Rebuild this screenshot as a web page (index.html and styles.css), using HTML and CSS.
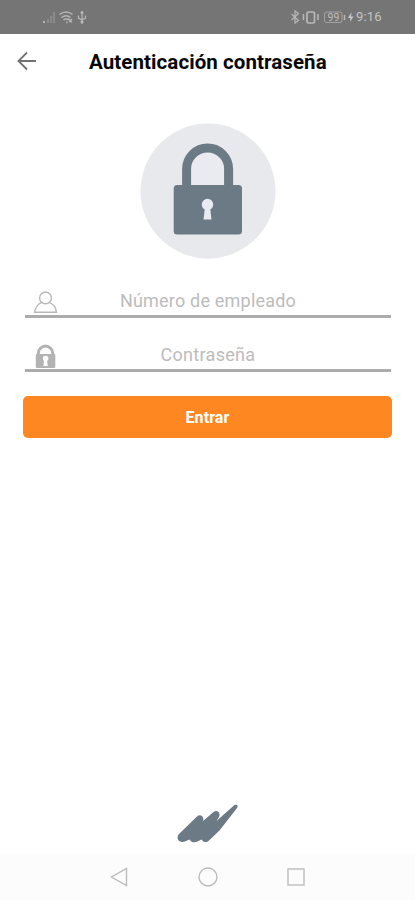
FILE: index.html
```html
<!DOCTYPE html>
<html lang="es">
<head>
<meta charset="utf-8">
<title>Autenticación contraseña</title>
<link rel="stylesheet" href="styles.css">
</head>
<body>
<div class="screen">
  <div class="status">
    <svg class="status-left" width="50" height="16" viewBox="0 0 50 16">
      <path d="M2 12h2v2h-2z" fill="#b5b5b5"/>
      <path d="M6 10h2v4h-2zM9 7h2v7h-2zM12 3h2v11h-2z" fill="#8b8b8b"/>
      <g fill="none" stroke="#b5b5b5" stroke-width="1.500">
        <path d="M18.500 5.500q7-5 13 0M20.500 8.500q5-3.500 9 0M22.500 11q3-2 5 0"/>
        <path d="M25 13.500h1.500M27 9.500l4 4M31 10l-3 3"/>
        <path d="M41 2.500v12M37.500 6.500v2.500l3.500 2 3.500-2v-2.500" stroke-width="1.300"/>
      </g>
      <path d="M39 4.500l2-3 2 3z" fill="#bdbdbd"/><circle cx="41" cy="13" r="1.500" fill="#bdbdbd"/>
    </svg>
    <div class="status-right">
      <svg width="64" height="16" viewBox="0 0 64 16">
        <g fill="none" stroke="#b9b9b9">
          <path d="M1.500 5l7 6.500-3.500 2.500v-12l3.500 2.500-7 6.500" stroke-width="1.200"/>
          <path d="M13.500 5v6M28 5v6" stroke-width="1.500"/>
          <rect x="17" y="3" width="7.500" height="11" rx="1.500" stroke-width="1.700"/>
          <rect x="34.500" y="3" width="17.500" height="10.500" rx="2" stroke-width=".7"/>
          <path d="M54.500 6v5" stroke-width="1.500"/>
        </g>
        <text class="battery" x="37.500" y="12">99</text>
        <path d="M61.500 3l-3.500 6h2.500l-.5 4 3.500-5.500h-2.500z" fill="#c8c8c8"/>
      </svg>
      <span class="clock">9:16</span>
    </div>
  </div>
  <header class="header">
    <svg class="back" width="20" height="20" viewBox="0 0 20 20"><path d="M19 10H2M10 1.500L1.500 10l8.500 8.500" fill="none" stroke="#727272" stroke-width="1.800"/></svg>
    <h1 class="title">Autenticación contraseña</h1>
  </header>
  <main class="main">
    <svg class="hero" width="136" height="136" viewBox="0 0 136 136">
      <circle cx="68" cy="68" r="67.500" fill="#e7e9ed"/>
      <path d="M46.600 66V46a21 21 0 0 1 42 0V66" fill="#e9ebf0" stroke="#6c7a86" stroke-width="9"/>
      <rect x="33.700" y="62" width="68.300" height="49.500" rx="3.500" fill="#6c7a86"/>
      <path d="M65 84h5l1.500 12.500h-8z" fill="#e9ebf2"/><circle cx="67.500" cy="81.500" r="5.700" fill="#e9ebf2"/>
    </svg>
    <div class="field first">
      <svg class="icon" width="26" height="26" viewBox="0 0 26 26"><g fill="none" stroke="#b9b9b9" stroke-width="1.400"><circle cx="12.500" cy="7.900" r="5.900"/><path d="M8.500 12.700C4.500 14 2.500 17.500 1.600 22.200H23.500C22.800 17.500 20.500 14 16.500 12.700"/></g></svg>
      <span class="label">Número de empleado</span>
    </div>
    <div class="field second">
      <svg class="icon" width="26" height="26" viewBox="0 0 26 26"><path d="M5.300 12V9.300a7.200 7.200 0 0 1 14.400 0v3" fill="none" stroke="#b3b3b3" stroke-width="3"/><rect x="2.800" y="10" width="19.500" height="14" rx="1" fill="#b3b3b3"/><path d="M11.400 14.500h2.400l1 7.500h-4.400z" fill="#fff"/><circle cx="12.600" cy="14.500" r="2.800" fill="#fff"/></svg>
      <span class="label narrow">Contraseña</span>
    </div>
    <button class="submit">Entrar</button>
  </main>
  <footer class="brand">
    <svg width="62" height="40" viewBox="0 0 62 40">
      <path d="M2 30L20 12.500C23 9.500 27.500 12.500 26 17L36.500 8C40 5.500 44 8.500 42 13L39.500 17L57.500 1C60 0 61.500 1.500 60 4L42.500 26.500L32 36.500C29.500 39 26.500 38.500 24.500 35.500L20.500 37.500C17.500 39 14.500 38.500 12.500 35.500L8 37.500C2 39.500-1.500 34 2 30Z" fill="#6c7a86"/>
    </svg>
  </footer>
  <nav class="nav">
    <svg width="20" height="20" viewBox="0 0 20 20"><path d="M16.500 1.500v17L1.500 10z"/></svg>
    <svg width="20" height="20" viewBox="0 0 20 20"><circle cx="10" cy="10" r="9"/></svg>
    <svg width="20" height="20" viewBox="0 0 20 20"><rect x="2" y="2" width="16" height="16"/></svg>
  </nav>
</div>
</body>
</html>
```
FILE: styles.css
```css
* { box-sizing: border-box; }
body { margin: 0; background: #fff; font-family: Roboto, "Liberation Sans", sans-serif; }
.screen { width: 415px; height: 900px; display: flex; flex-direction: column; overflow: hidden; }
.status { height: 34px; flex: none; background: #757575; display: flex; justify-content: space-between; align-items: center; padding: 0 32px 0 41px; }
.status-right { display: flex; align-items: center; gap: 2px; }
.battery { font-size: 10.500px; fill: #bdbdbd; }
.clock { font-size: 13px; line-height: 16px; color: #c4c4c4; width: 27px; white-space: nowrap; letter-spacing: .2px; }
.header { height: 56px; flex: none; display: flex; align-items: center; padding: 0 0 2px 17px; }
.back { flex: none; }
.title { margin: 0 0 0 52px; padding-top: 2px; font-size: 20.500px; line-height: 26px; font-weight: 700; color: #080808; white-space: nowrap; letter-spacing: .08px; }
.main { flex: 1; display: flex; flex-direction: column; padding: 33px 23px 0; }
.hero { align-self: center; flex: none; }
.field { height: 33px; margin: 0 1px 0 2px; display: flex; align-items: flex-start; border-bottom: 3px solid #acacac; }
.first { margin-top: 26px; }
.second { margin-top: 21px; }
.icon { flex: none; margin: 5px 0 0 8px; }
.label { flex: 1; margin-right: 34px; padding-top: 4px; font-size: 18px; line-height: 24px; text-align: center; color: #bcbcbc; letter-spacing: .2px; }
.narrow { letter-spacing: .3px; }
.submit { height: 42px; flex: none; margin-top: 24px; padding: 0; border: 0; border-radius: 5px; background: #ff8722; color: #fff; font: 700 16px Roboto, sans-serif; letter-spacing: .1px; }
.brand { display: flex; justify-content: center; height: 50px; flex: none; }
.nav { height: 46px; flex: none; display: flex; justify-content: center; align-items: center; gap: 68px; background: #fcfcfc; }
.nav svg { fill: none; stroke: #bcbcbc; stroke-width: 1.400; }
```
